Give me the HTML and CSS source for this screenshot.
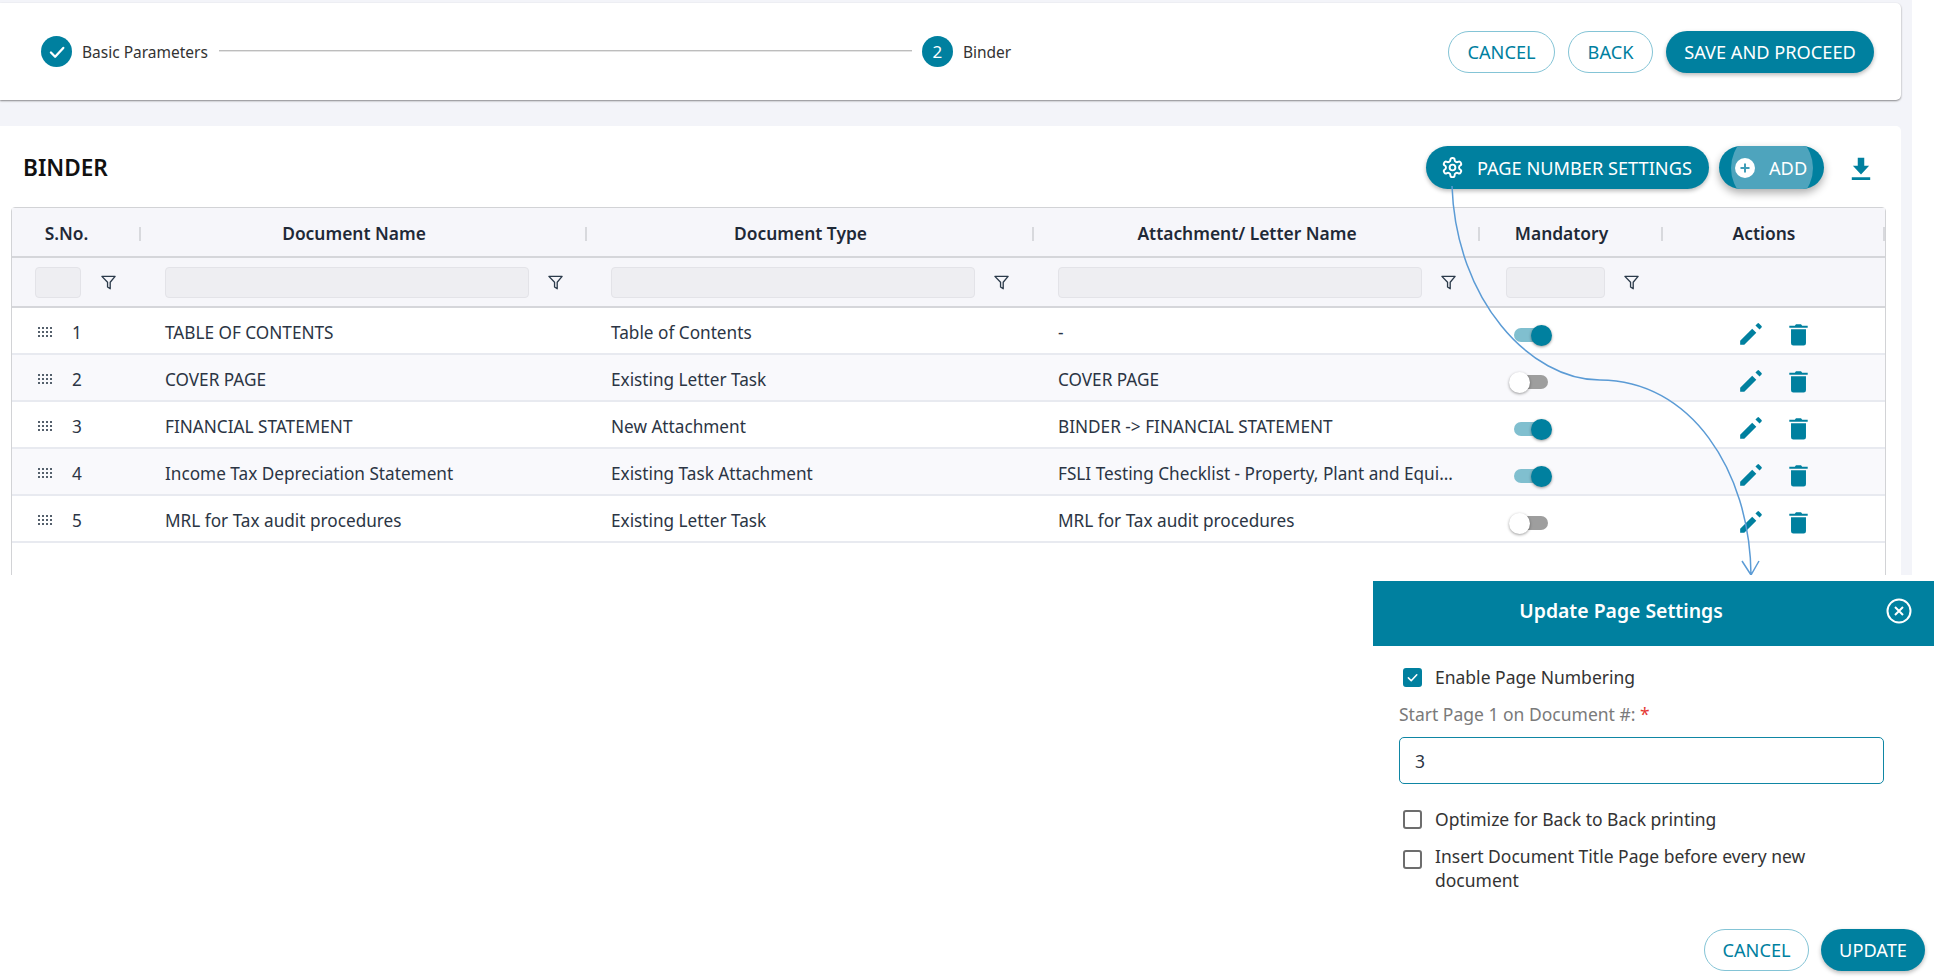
FILE: index.html
```html
<!DOCTYPE html>
<html lang="en">
<head>
<meta charset="utf-8">
<title>Binder</title>
<link rel="stylesheet" href="styles.css">
</head>
<body>
<svg width="0" height="0" class="defs">
  <symbol id="i-filter" viewBox="0 0 18 18"><path d="M2 2.500h14l-5.200 6.200v7L8 13.800V8.700z" fill="none" stroke="#2b3a4a" stroke-width="1.400" stroke-linejoin="round"/></symbol>
  <symbol id="i-edit" viewBox="0 0 24 24"><path fill="#00809f" d="M2 18.200V22h3.800L16.900 10.900l-3.800-3.800zM21.700 6a1 1 0 0 0 0-1.400l-2.300-2.300a1 1 0 0 0-1.400 0l-1.900 1.800 3.800 3.800z"/></symbol>
  <symbol id="i-trash" viewBox="0 0 16 20"><path fill="#00809f" d="M1.500 5.500h13V17.600a2 2 0 0 1-2 2h-9a2 2 0 0 1-2-2zM0 2.400h4.800L5.800 1h4.400l1 1.400H16v1.800H0z"/></symbol>
  <symbol id="i-drag" viewBox="0 0 14 11"><g fill="#55606c"><rect x="0" y="0" width="2" height="2"/><rect x="4" y="0" width="2" height="2"/><rect x="8" y="0" width="2" height="2"/><rect x="12" y="0" width="2" height="2"/><rect x="0" y="4" width="2" height="2"/><rect x="4" y="4" width="2" height="2"/><rect x="8" y="4" width="2" height="2"/><rect x="12" y="4" width="2" height="2"/><rect x="0" y="8" width="2" height="2"/><rect x="4" y="8" width="2" height="2"/><rect x="8" y="8" width="2" height="2"/><rect x="12" y="8" width="2" height="2"/></g></symbol>
  <symbol id="i-check" viewBox="0 0 20 20"><path d="M4.500 10.500l3.800 3.800 7.400-8" fill="none" stroke="#fff" stroke-width="2.100" stroke-linecap="round" stroke-linejoin="round"/></symbol>
</svg>

<main class="page">
  <section class="stepper-card">
    <div class="step">
      <span class="step-dot"><svg class="step-check"><use href="#i-check"/></svg></span>
      <span class="step-label">Basic Parameters</span>
    </div>
    <span class="step-line"></span>
    <div class="step">
      <span class="step-dot">2</span>
      <span class="step-label">Binder</span>
    </div>
    <div class="top-actions">
      <button class="btn btn-outline btn-cancel">CANCEL</button>
      <button class="btn btn-outline btn-back">BACK</button>
      <button class="btn btn-solid btn-save">SAVE AND PROCEED</button>
    </div>
  </section>

  <section class="binder-card">
    <header class="binder-head">
      <h1 class="binder-title">BINDER</h1>
      <button class="btn btn-solid btn-pages">
        <svg class="gear" viewBox="0 0 24 24"><path d="M12.220 2h-.44a2 2 0 0 0-2 2v.18a2 2 0 0 1-1 1.730l-.43.25a2 2 0 0 1-2 0l-.15-.08a2 2 0 0 0-2.730.73l-.22.38a2 2 0 0 0 .73 2.730l.15.1a2 2 0 0 1 1 1.720v.51a2 2 0 0 1-1 1.740l-.15.09a2 2 0 0 0-.73 2.730l.22.38a2 2 0 0 0 2.730.73l.15-.08a2 2 0 0 1 2 0l.43.25a2 2 0 0 1 1 1.730V20a2 2 0 0 0 2 2h.44a2 2 0 0 0 2-2v-.18a2 2 0 0 1 1-1.730l.43-.25a2 2 0 0 1 2 0l.15.08a2 2 0 0 0 2.730-.73l.22-.39a2 2 0 0 0-.73-2.730l-.15-.08a2 2 0 0 1-1-1.740v-.5a2 2 0 0 1 1-1.740l.15-.09a2 2 0 0 0 .73-2.730l-.22-.38a2 2 0 0 0-2.730-.73l-.15.08a2 2 0 0 1-2 0l-.43-.25a2 2 0 0 1-1-1.730V4a2 2 0 0 0-2-2z"/><circle cx="12" cy="12" r="3"/></svg>
        PAGE NUMBER SETTINGS
      </button>
      <button class="btn btn-solid btn-add">
        <span class="ripple"></span>
        <svg class="plus" viewBox="0 0 20 20"><circle cx="10" cy="10" r="10" fill="#fff"/><path d="M10 5.500v9M5.500 10h9" stroke="#3f9db8" stroke-width="2"/></svg>
        <span class="add-text">ADD</span>
      </button>
      <svg class="download" viewBox="0 0 24 24"><path fill="#00809f" d="M19.500 10H15V2.500H9V10H4.500l7.500 8zM3.500 20.500h17V23h-17z"/></svg>
    </header>

    <div class="grid">
      <div class="row row-head">
        <div class="th">S.No.</div>
        <div class="th">Document Name</div>
        <div class="th">Document Type</div>
        <div class="th">Attachment/ Letter Name</div>
        <div class="th">Mandatory</div>
        <div class="th">Actions</div>
      </div>
      <div class="row row-filter">
        <div class="tf tf-sno"><span class="tf-input"></span><svg class="funnel"><use href="#i-filter"/></svg></div>
        <div class="tf"><span class="tf-input"></span><svg class="funnel"><use href="#i-filter"/></svg></div>
        <div class="tf"><span class="tf-input"></span><svg class="funnel"><use href="#i-filter"/></svg></div>
        <div class="tf"><span class="tf-input"></span><svg class="funnel"><use href="#i-filter"/></svg></div>
        <div class="tf tf-man"><span class="tf-input"></span><svg class="funnel"><use href="#i-filter"/></svg></div>
        <div class="tf"></div>
      </div>

      <div class="row row-body">
        <div class="td td-sno"><svg class="drag"><use href="#i-drag"/></svg>1</div>
        <div class="td">TABLE OF CONTENTS</div>
        <div class="td">Table of Contents</div>
        <div class="td">-</div>
        <div class="td td-man"><span class="switch on"></span></div>
        <div class="td td-act"><svg class="edit"><use href="#i-edit"/></svg><svg class="trash"><use href="#i-trash"/></svg></div>
      </div>
      <div class="row row-body alt">
        <div class="td td-sno"><svg class="drag"><use href="#i-drag"/></svg>2</div>
        <div class="td">COVER PAGE</div>
        <div class="td">Existing Letter Task</div>
        <div class="td">COVER PAGE</div>
        <div class="td td-man"><span class="switch"></span></div>
        <div class="td td-act"><svg class="edit"><use href="#i-edit"/></svg><svg class="trash"><use href="#i-trash"/></svg></div>
      </div>
      <div class="row row-body">
        <div class="td td-sno"><svg class="drag"><use href="#i-drag"/></svg>3</div>
        <div class="td">FINANCIAL STATEMENT</div>
        <div class="td">New Attachment</div>
        <div class="td">BINDER -&gt; FINANCIAL STATEMENT</div>
        <div class="td td-man"><span class="switch on"></span></div>
        <div class="td td-act"><svg class="edit"><use href="#i-edit"/></svg><svg class="trash"><use href="#i-trash"/></svg></div>
      </div>
      <div class="row row-body alt">
        <div class="td td-sno"><svg class="drag"><use href="#i-drag"/></svg>4</div>
        <div class="td">Income Tax Depreciation Statement</div>
        <div class="td">Existing Task Attachment</div>
        <div class="td"><span class="clip">FSLI Testing Checklist - Property, Plant and Equi...</span></div>
        <div class="td td-man"><span class="switch on"></span></div>
        <div class="td td-act"><svg class="edit"><use href="#i-edit"/></svg><svg class="trash"><use href="#i-trash"/></svg></div>
      </div>
      <div class="row row-body">
        <div class="td td-sno"><svg class="drag"><use href="#i-drag"/></svg>5</div>
        <div class="td">MRL for Tax audit procedures</div>
        <div class="td">Existing Letter Task</div>
        <div class="td">MRL for Tax audit procedures</div>
        <div class="td td-man"><span class="switch"></span></div>
        <div class="td td-act"><svg class="edit"><use href="#i-edit"/></svg><svg class="trash"><use href="#i-trash"/></svg></div>
      </div>
    </div>
  </section>

  <svg class="connector" viewBox="0 0 1934 978">
    <path d="M1452 186C1456 300 1530 380 1600 380C1690 380 1750 470 1751 575M1742 561L1751 575L1759 561"/>
  </svg>
</main>

<aside class="dialog">
  <header class="dialog-head">
    <h2 class="dialog-title">Update Page Settings</h2>
    <svg class="dialog-close" viewBox="0 0 26 26"><circle cx="13" cy="13" r="11.500"/><path d="M9 9l8 8M17 9l-8 8"/></svg>
  </header>
  <div class="dialog-body">
    <label class="check-row">
      <span class="box box-on"><svg class="box-mark"><use href="#i-check"/></svg></span>
      <span>Enable Page Numbering</span>
    </label>
    <div class="field-label">Start Page 1 on Document #: <span class="req">*</span></div>
    <div class="field-input">3</div>
    <label class="check-row check-opt">
      <span class="box"></span>
      <span>Optimize for Back to Back printing</span>
    </label>
    <label class="check-row check-ins">
      <span class="box"></span>
      <span>Insert Document Title Page before every new document</span>
    </label>
  </div>
  <footer class="dialog-foot">
    <button class="btn btn-outline btn-d-cancel">CANCEL</button>
    <button class="btn btn-solid btn-update">UPDATE</button>
  </footer>
</aside>
</body>
</html>
```

FILE: styles.css
```css
* { box-sizing: border-box; }
html, body { margin: 0; padding: 0; background: #fff; }
body {
  width: 1934px;
  height: 978px;
  overflow: hidden;
  position: relative;
  font-family: "Noto Sans", "Open Sans", sans-serif;
  font-size: 17.200px;
  color: #2b3544;
}
.defs { position: absolute; }

.page {
  width: 1912px;
  height: 575px;
  background: #f3f4f9;
  padding: 3px 11px 0 0;
  overflow: hidden;
  position: relative;
}

/* stepper */
.stepper-card {
  height: 97px;
  background: #fff;
  border-radius: 0 5px 5px 0;
  box-shadow: 0 1px 2px rgba(0,0,0,.45);
  display: flex;
  align-items: center;
  padding: 0 27px 0 41px;
}
.step { display: flex; align-items: center; gap: 10px; }
.step-dot {
  width: 31px;
  height: 31px;
  border-radius: 50%;
  background: #00809f;
  color: #fff;
  font-size: 17px;
  display: flex;
  align-items: center;
  justify-content: center;
}
.step-check { width: 22px; height: 22px; }
.step-label { font-size: 15.500px; color: #333; padding-top: 1px; }
.step-line { width: 693px; height: 1px; background: #bdbdbd; margin: 0 10px 2px 11px; box-shadow: 0 1px 0 #e4e4e4; }
.top-actions { margin-left: auto; display: flex; gap: 13px; }

/* buttons */
.btn {
  height: 42px;
  border-radius: 22px;
  font-family: inherit;
  font-size: 18.200px;
  padding: 0;
  white-space: nowrap;
  display: inline-flex;
  align-items: center;
  justify-content: center;
}
.btn-outline { background: #fff; color: #00809f; border: 1px solid #84c4d6; }
.btn-solid { background: #00809f; color: #fff; border: 0; box-shadow: 0 2px 4px rgba(0,0,0,.28); }
.btn-cancel { width: 107px; }
.btn-back { width: 85px; }
.btn-save { width: 208px; }

/* binder card */
.binder-card {
  margin-top: 26px;
  height: 460px;
  background: #fff;
  border-radius: 0 5px 0 0;
  padding: 0 15px 0 11px;
}
.binder-head { height: 81px; display: flex; align-items: center; padding-top: 2px; }
.binder-title { margin: 0 0 0 12px; font-size: 22.600px; font-weight: 600; color: #111; }
.btn-pages { margin-left: auto; width: 283px; height: 43px; justify-content: flex-start; padding-left: 15px; gap: 13px; }
.gear { width: 23px; height: 23px; fill: none; stroke: #fff; stroke-width: 2; }
.btn-add { margin-left: 10px; width: 105px; height: 43px; position: relative; overflow: hidden; justify-content: flex-start; padding-left: 16px; box-shadow: 0 4px 9px rgba(0,0,0,.32); }
.ripple { position: absolute; left: 12px; top: -18px; width: 82px; height: 80px; border-radius: 50%; background: #4ea4bd; }
.plus { width: 20px; height: 20px; position: relative; }
.add-text { position: relative; margin-left: 14px; }
.download { width: 26px; height: 26px; margin-left: 24px; margin-right: 12px; }

/* table */
.grid {
  border: 1px solid #d2d3d6;
  border-radius: 4px 4px 0 0;
  height: 400px;
  background: #fff;
}
.row {
  display: grid;
  grid-template-columns: 129px 446px 447px 446px 183px 1fr;
}
.row-head { height: 50px; background: #f6f6fa; border-bottom: 2px solid #d5d6da; padding-top: 1px; }
.th {
  display: flex;
  align-items: center;
  justify-content: center;
  font-size: 17.400px;
  font-weight: 600;
  color: #1f2937;
  position: relative;
  padding-right: 20px;
}
.th::after { content: ""; position: absolute; right: 0; top: 18px; width: 2px; height: 14px; background: #d8d9dd; }
.row-filter { height: 50px; background: #f6f6fa; border-bottom: 2px solid #d5d6da; }
.tf { display: flex; align-items: center; padding-left: 24px; }
.tf-input { flex: none; width: 364px; height: 31px; background: #eeeef2; border: 1px solid #e3e3e8; border-radius: 4px; }
.funnel { width: 17px; height: 17px; margin-left: 18px; flex: none; }
.tf-sno { padding-left: 23px; }
.tf-sno .tf-input { width: 46px; }
.tf-sno .funnel { margin-left: 19px; }
.tf-man { padding-left: 26px; }
.tf-man .tf-input { width: 99px; }
.row-body { height: 47px; border-bottom: 2px solid #e8eaf0; background: #fff; }
.row-body.alt { background: #f9f9fc; }
.td { display: flex; align-items: center; padding: 3px 0 0 24px; min-width: 0; white-space: nowrap; color: #2b3544; }
.clip { overflow: hidden; }
.td-sno { padding-left: 26px; gap: 20px; }
.drag { width: 14px; height: 11px; }
.td-man { padding-left: 34px; }
.td-act { padding: 7px 0 0 75px; gap: 25px; }
.edit { width: 26px; height: 26px; }
.trash { width: 19px; height: 23px; }

.switch { width: 34px; height: 14px; border-radius: 7px; background: #9e9e9e; position: relative; display: block; margin-top: 6px; }
.switch::after {
  content: "";
  position: absolute;
  left: -5px;
  top: -3px;
  width: 21px;
  height: 21px;
  border-radius: 50%;
  background: #fff;
  box-shadow: 0 1px 3px rgba(0,0,0,.4);
}
.switch.on { background: #80bfcf; }
.switch.on::after { left: 17px; background: #00809f; }

/* connector */
.connector { position: absolute; left: 0; top: 0; width: 1934px; height: 978px; pointer-events: none; }
.connector path { fill: none; stroke: #5b9bd5; stroke-width: 1.500; }

/* dialog */
.dialog {
  position: absolute;
  left: 1373px;
  top: 581px;
  width: 561px;
  height: 397px;
  background: #fff;
}
.dialog-head {
  height: 65px;
  background: #00809f;
  display: flex;
  align-items: center;
  justify-content: center;
  position: relative;
  padding-bottom: 7px;
}
.dialog-title { margin: 0 0 0 -65px; font-size: 19.400px; font-weight: 600; color: #fff; }
.dialog-close { position: absolute; right: 22px; top: 17px; width: 26px; height: 26px; fill: none; stroke: #fff; stroke-width: 2; }
.dialog-body { padding: 19px 50px 0 26px; font-size: 17.500px; }
.check-row { display: flex; align-items: flex-start; gap: 13px; line-height: 24px; padding-left: 4px; color: #333; }
.box { width: 19px; height: 19px; border: 2px solid #6d6d6d; border-radius: 3px; flex: none; margin-top: 3px; background: #fff; }
.box-on { background: #00809f; border-color: #00809f; }
.box-mark { width: 15px; height: 15px; display: block; }
.field-label { margin-top: 13px; line-height: 24px; color: #7a7a7a; }
.req { color: #e53935; }
.field-input { margin-top: 11px; height: 47px; border: 1.500px solid #0f86a4; border-radius: 5px; padding-left: 15px; display: flex; align-items: center; }
.check-opt { margin-top: 23px; }
.check-ins { margin-top: 13px; }
.check-ins .box { margin-top: 6px; }
.dialog-foot { position: absolute; left: 331px; top: 348px; display: flex; gap: 12px; }
.btn-d-cancel { width: 105px; }
.btn-update { width: 104px; }
```
